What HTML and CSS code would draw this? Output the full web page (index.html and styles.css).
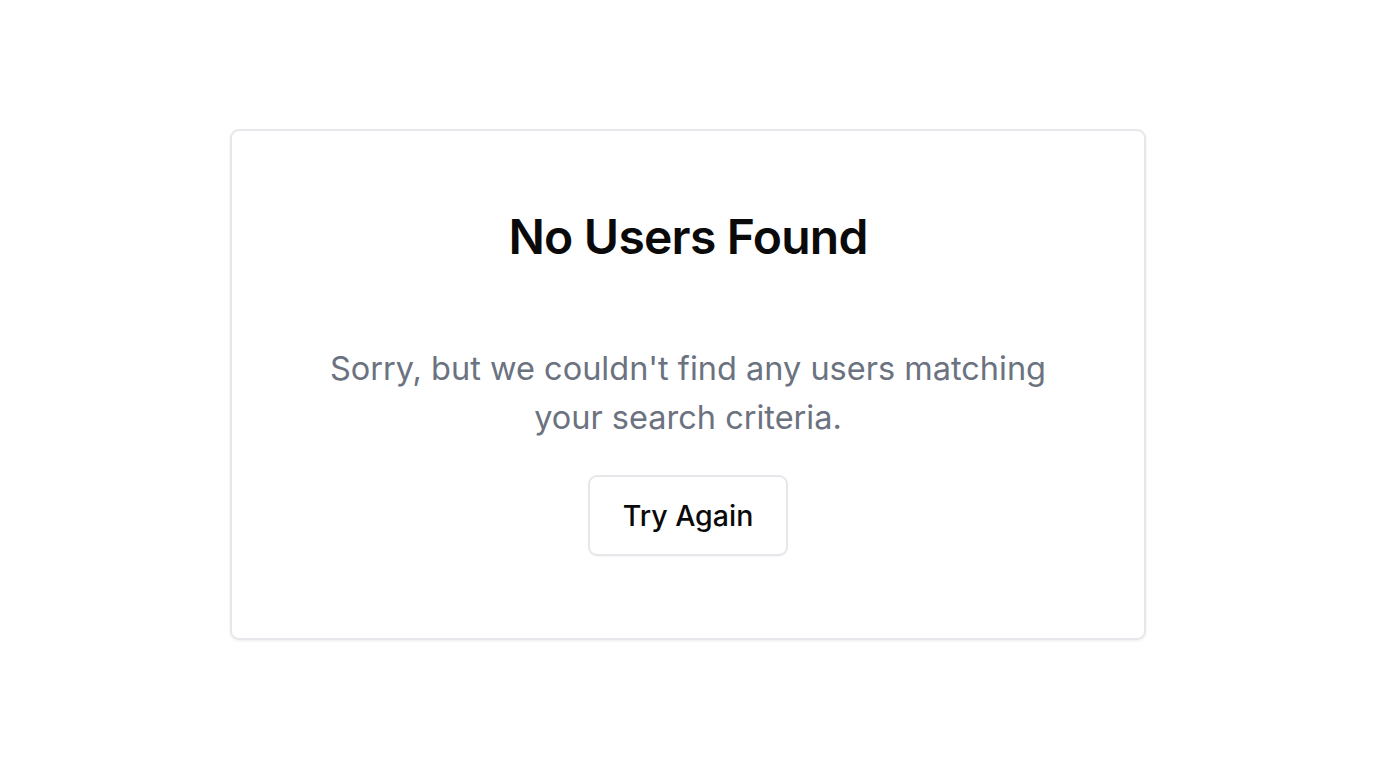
FILE: index.html
```html
<!DOCTYPE html>
<html lang="en">
<head>
<meta charset="utf-8">
<title>No Users Found</title>
<link rel="stylesheet" href="styles.css">
</head>
<body>
<main class="page">
  <section class="card">
    <h1 class="title">No Users Found</h1>
    <p class="message">Sorry, but we couldn't find any users matching your search criteria.</p>
    <button class="btn" type="button">Try Again</button>
  </section>
</main>
</body>
</html>
```

FILE: styles.css
```css
* { box-sizing: border-box; }
html, body { margin: 0; padding: 0; background: #ffffff; }
body { font-family: Inter, "Noto Sans", sans-serif; color: #0a0a0a; }
.page {
  min-height: 768px;
  display: flex;
  align-items: center;
  justify-content: center;
}
.card {
  width: 916px;
  border: 2px solid #e5e7eb;
  border-radius: 9px;
  box-shadow: 0 1px 3px rgba(0,0,0,0.08);
  padding: 82px 48px 82px;
  display: flex;
  flex-direction: column;
  align-items: center;
}
.title {
  margin: 0;
  font-size: 48px;
  line-height: 48px;
  font-weight: 600;
  letter-spacing: -0.016em;
  color: #0a0a0a;
}
.message {
  margin: 83px 0 0;
  max-width: 740px;
  text-align: center;
  font-size: 32.5px;
  line-height: 49px;
  color: #6b7280;
}
.btn {
  margin-top: 33px;
  width: 200px;
  height: 81px;
  border: 2px solid #e5e7eb;
  border-radius: 9px;
  background: #ffffff;
  font-family: inherit;
  font-size: 28.5px;
  font-weight: 500;
  color: #0a0a0a;
  box-shadow: 0 1px 2px rgba(0,0,0,0.04);
}
```
